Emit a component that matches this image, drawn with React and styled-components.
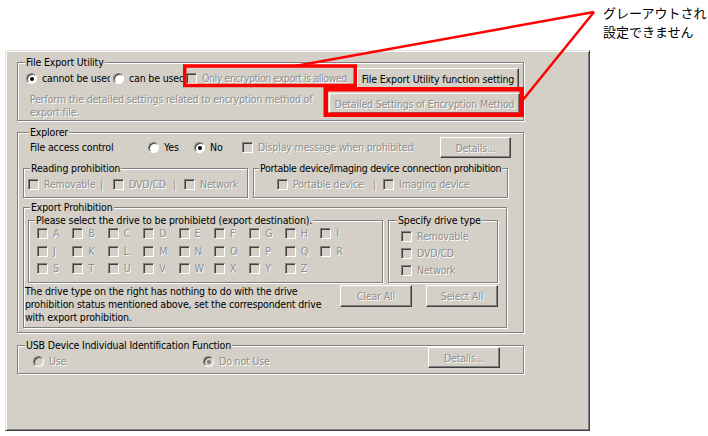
import React from 'react';
import styled, { createGlobalStyle } from 'styled-components';

const GlobalStyle = createGlobalStyle`
  html, body { margin: 0; padding: 0; background: #fff; }
  body { font-family: "Liberation Sans", Arial, sans-serif; font-size: 11px; }
`;

const GRAY_TEXT = '#8e8e8e';

const Page = styled.div`
  position: relative;
  width: 708px;
  height: 436px;
  overflow: hidden;
  background: #fff;
  box-sizing: border-box;
  padding: 50px 0 0 5px;
`;

const Window = styled.div`
  width: 585px;
  height: 381px;
  box-sizing: border-box;
  background: #d4d0c8;
  border: 1px solid;
  border-color: #e6e4df #404040 #404040 #e6e4df;
  box-shadow: inset 1px 1px 0 #fff, inset -1px -1px 0 #808080;
  padding: 11px 0 0 11px;
  display: flex;
  flex-direction: column;
  font-family: "DejaVu Sans Condensed", "Liberation Sans", Arial, sans-serif;
  font-size: 10.5px;
  letter-spacing: -0.15px;
  color: #000;
`;

const Group = styled.div`
  position: relative;
  box-sizing: border-box;
  flex: none;
  width: ${(p) => p.$w}px;
  height: ${(p) => p.$h}px;
  margin-top: ${(p) => p.$mt || 0}px;
  margin-left: ${(p) => p.$ml || 0}px;
  border: 1px solid #808080;
  box-shadow: inset 1px 1px 0 #fff, 1px 1px 0 #fff;
  padding: ${(p) => p.$pad || '0'};
  display: flex;
  flex-direction: column;
`;

const Legend = styled.span`
  position: absolute;
  top: -7px;
  left: ${(p) => (p.$x ?? 6)}px;
  padding: 0 1px;
  background: #d4d0c8;
  line-height: 13px;
  color: #000;
  white-space: nowrap;
  ${(p) => (p.$ls ? `letter-spacing: ${p.$ls}px;` : '')}
`;

const Row = styled.div`
  display: flex;
  align-items: ${(p) => p.$align || 'center'};
  flex: none;
  height: ${(p) => (p.$h ? `${p.$h}px` : 'auto')};
  margin-top: ${(p) => p.$mt || 0}px;
  padding-left: ${(p) => p.$pl || 0}px;
  padding-right: ${(p) => p.$pr || 0}px;
  justify-content: ${(p) => p.$justify || 'flex-start'};
`;

const Option = styled.div`
  display: flex;
  align-items: center;
  gap: 5px;
  flex: none;
  width: ${(p) => (p.$w ? `${p.$w}px` : 'auto')};
  height: ${(p) => p.$h || 15}px;
  margin-top: ${(p) => p.$mt || 0}px;
  overflow: hidden;
`;

const Label = styled.span`
  display: block;
  line-height: 13px;
  white-space: nowrap;
  overflow: hidden;
  color: ${(p) => (p.$disabled ? GRAY_TEXT : '#000')};
  text-shadow: ${(p) => (p.$disabled ? '1px 1px 0 #fff' : 'none')};
  ${(p) => (p.$max ? `max-width: ${p.$max}px;` : '')}
  ${(p) => (p.$w ? `width: ${p.$w}px; flex: none;` : '')}
  ${(p) => (p.$ls ? `letter-spacing: ${p.$ls}px;` : '')}
`;

const Checkbox = styled.span`
  flex: none;
  width: 11px;
  height: 11px;
  box-sizing: border-box;
  border: 1px solid;
  border-color: #808080 #fff #fff #808080;
  box-shadow: inset 1px 1px 0 #404040, inset -1px -1px 0 #d4d0c8;
  background: ${(p) => (p.$disabled ? '#d4d0c8' : '#fff')};
`;

const Radio = styled.span`
  position: relative;
  flex: none;
  width: 11px;
  height: 11px;
  box-sizing: border-box;
  border-radius: 50%;
  border: 1px solid;
  border-color: #808080 #fff #fff #808080;
  box-shadow: inset 1px 1px 0 #404040;
  background: ${(p) => (p.$disabled ? '#d4d0c8' : '#fff')};
  &::after {
    content: '';
    display: ${(p) => (p.$checked ? 'block' : 'none')};
    position: absolute;
    left: 2.5px;
    top: 2.5px;
    width: 4px;
    height: 4px;
    border-radius: 50%;
    background: ${(p) => (p.$disabled ? '#808080' : '#000')};
  }
`;

const Sep = styled.span`
  flex: none;
  width: ${(p) => p.$w}px;
  color: ${GRAY_TEXT};
  text-shadow: 1px 1px 0 #fff;
  line-height: 13px;
`;

const Button = styled.button`
  box-sizing: border-box;
  flex: none;
  width: ${(p) => p.$w}px;
  height: ${(p) => p.$h || 21}px;
  margin: 0;
  margin-left: ${(p) => `${p.$ml || 0}px`};
  padding: 0;
  background: #d4d0c8;
  border: 1px solid;
  border-color: #fff #404040 #404040 #fff;
  box-shadow: inset -1px -1px 0 #808080;
  font: inherit;
  letter-spacing: inherit;
  white-space: nowrap;
  overflow: hidden;
  color: ${(p) => (p.disabled ? GRAY_TEXT : '#000')};
  text-shadow: ${(p) => (p.disabled ? '1px 1px 0 #fff' : 'none')};
`;

const Paragraph = styled.div`
  flex: none;
  width: ${(p) => p.$w}px;
  line-height: 13px;
  white-space: nowrap;
  color: ${(p) => (p.$disabled ? GRAY_TEXT : '#000')};
  text-shadow: ${(p) => (p.$disabled ? '1px 1px 0 #fff' : 'none')};
`;

const DriveGrid = styled.div`
  display: grid;
  grid-template-columns: repeat(9, 35.4px);
  grid-auto-rows: 17.5px;
  align-items: center;
`;

const DriveList = styled.div`
  display: flex;
  flex-direction: column;
`;

const Overlay = styled.svg`
  position: absolute;
  left: 0;
  top: 0;
  pointer-events: none;
`;

const Callout = styled.div`
  position: absolute;
  left: 603px;
  top: 3px;
  font-family: "Noto Sans CJK JP", "Noto Sans CJK SC", sans-serif;
  font-size: 13px;
  line-height: 19px;
  color: #000;
  white-space: nowrap;
`;

const CB = ({ w, children, disabled = true, mt, ls }) => (
  <Option $w={w} $mt={mt}>
    <Checkbox $disabled={disabled} />
    <Label $disabled={disabled} $ls={ls}>{children}</Label>
  </Option>
);

const RB = ({ w, children, disabled, checked, mt, max }) => (
  <Option $w={w} $mt={mt}>
    <Radio $disabled={disabled} $checked={checked} />
    <Label $disabled={disabled} $max={max}>{children}</Label>
  </Option>
);

const LETTERS = 'ABCDEFGHIJKLMNOPQRSTUVWXYZ'.split('');

export default function App() {
  return (
    <Page>
      <GlobalStyle />
      <Window>
        <Group $w={507} $h={59} $pad="5px 0 0 0">
          <Legend $x={7}>File Export Utility</Legend>
          <Row $h={21} $pl={8}>
            <RB w={87} checked max={68}>cannot be used</RB>
            <RB w={73}>can be used</RB>
            <CB w={171} ls={-0.42}>Only encryption export is allowed</CB>
            <Button $w={162}>File Export Utility function setting</Button>
          </Row>
          <Row $mt={4} $pl={12} $pr={3} $align="flex-start" $justify="space-between">
            <Paragraph $w={290} $disabled>
              Perform the detailed settings related to encryption method of
              <br />
              export file.
            </Paragraph>
            <Button $w={191} disabled>Detailed Settings of Encryption Method</Button>
          </Row>
        </Group>

        <Group $w={507} $h={201} $mt={11} $pad="4px 0 0 5px">
          <Legend $x={11}>Explorer</Legend>
          <Row $h={21} $pl={7}>
            <Label $w={118}>File access control</Label>
            <RB w={46}>Yes</RB>
            <RB w={48} checked>No</RB>
            <CB w={198}>Display message when prohibited</CB>
            <Button $w={71} disabled>Details...</Button>
          </Row>
          <Row $mt={10} $align="flex-start">
            <Group $w={225} $h={30} $pad="8px 0 0 4px">
              <Legend>Reading prohibition</Legend>
              <Row $h={15}>
                <CB w={72}>Removable</CB>
                <Sep $w={13}>|</Sep>
                <CB w={60}>DVD/CD</CB>
                <Sep $w={11}>|</Sep>
                <CB>Network</CB>
              </Row>
            </Group>
            <Group $w={255} $h={30} $ml={5} $pad="8px 0 0 23px">
              <Legend $x={5} $ls={-0.3}>Portable device/imaging device connection prohibition</Legend>
              <Row $h={15}>
                <CB w={96}>Portable device</CB>
                <Sep $w={10}>|</Sep>
                <CB>Imaging device</CB>
              </Row>
            </Group>
          </Row>
          <Group $w={484} $h={121} $mt={9} $pad="12px 0 0 1px">
            <Legend>Export Prohibition</Legend>
            <Row $pl={3} $align="flex-start">
              <Group $w={355} $h={63} $pad="4px 0 0 8px">
                <Legend>Please select the drive to be prohibietd (export destination).</Legend>
                <DriveGrid>
                  {LETTERS.map((l) => (
                    <CB key={l}>{l}</CB>
                  ))}
                </DriveGrid>
              </Group>
              <Group $w={110} $h={63} $ml={5} $pad="6.5px 0 0 12px">
                <Legend $x={8}>Specify drive type</Legend>
                <DriveList>
                  <Option $h={17}><Checkbox $disabled /><Label $disabled>Removable</Label></Option>
                  <Option $h={17}><Checkbox $disabled /><Label $disabled>DVD/CD</Label></Option>
                  <Option $h={17}><Checkbox $disabled /><Label $disabled>Network</Label></Option>
                </DriveList>
              </Group>
            </Row>
            <Row $mt={2} $align="flex-start">
              <Paragraph $w={315}>
                The drive type on the right has nothing to do with the drive
                <br />
                prohibition status mentioned above, set the correspondent drive
                <br />
                with export prohibition.
              </Paragraph>
              <Button $w={72} $h={22} disabled>Clear All</Button>
              <Button $w={72} $h={22} $ml={14} disabled>Select All</Button>
            </Row>
          </Group>
        </Group>

        <Group $w={507} $h={29} $mt={12} $pad="1px 0 0 15px">
          <Legend $x={7}>USB Device Individual Identification Function</Legend>
          <Row $align="flex-start">
            <RB w={170} mt={7} disabled>Use</RB>
            <RB w={225} mt={7} disabled checked>Do not Use</RB>
            <Button $w={72} disabled>Details...</Button>
          </Row>
        </Group>
      </Window>

      <Overlay width="708" height="436" viewBox="0 0 708 436">
        <g fill="none" stroke="#ff0000">
          <rect x="184.75" y="66" width="170.5" height="19.5" strokeWidth="3.5" />
          <rect x="325.75" y="89.25" width="196" height="25.5" strokeWidth="4.5" />
          <line x1="295" y1="66" x2="594" y2="12" strokeWidth="2.5" />
          <line x1="594" y1="12" x2="522" y2="101" strokeWidth="2.5" />
        </g>
      </Overlay>
      <Callout>
        グレーアウトされ
        <br />
        設定できません
      </Callout>
    </Page>
  );
}
